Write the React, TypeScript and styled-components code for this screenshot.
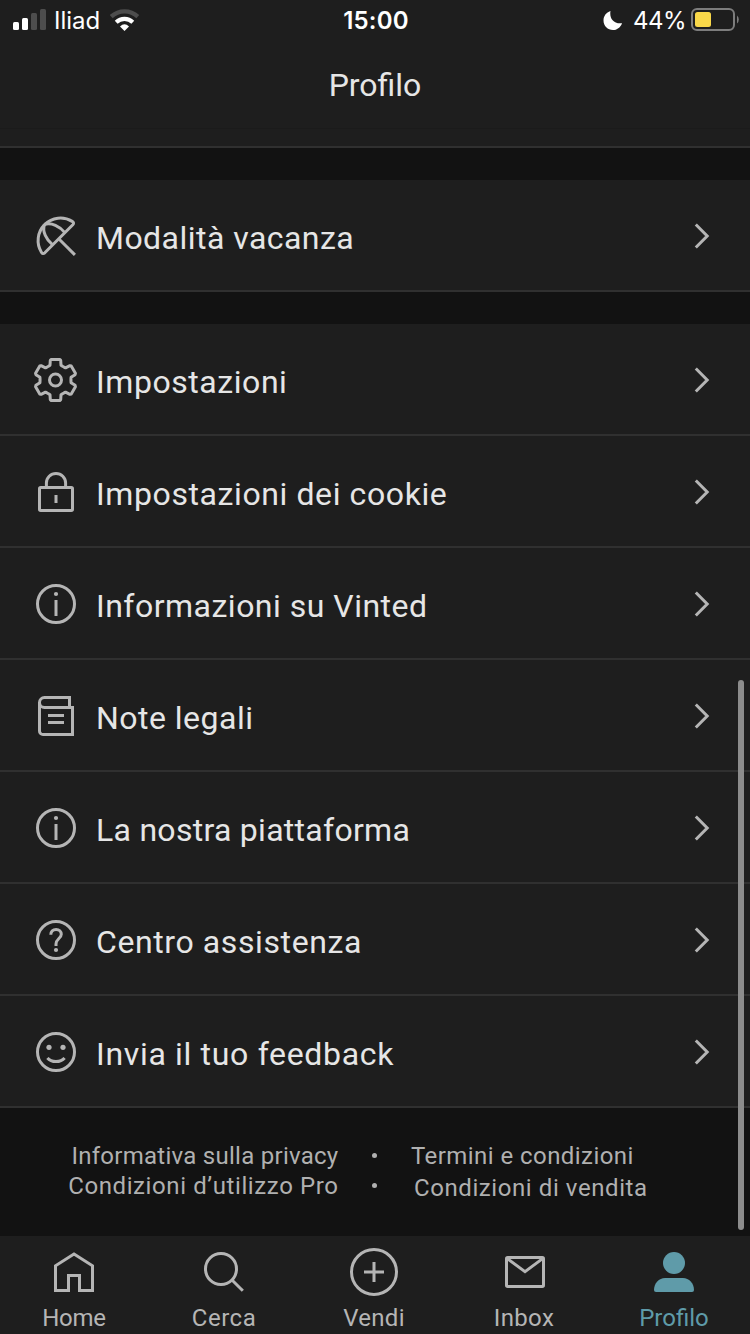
import React from "react";
import styled, { createGlobalStyle } from "styled-components";

const GlobalStyle = createGlobalStyle`
  *, *::before, *::after { box-sizing: border-box; }
  body { margin: 0; background: #1e1e1e; }
`;

const Screen = styled.div`
  position: relative;
  display: flex;
  flex-direction: column;
  width: 750px;
  height: 1334px;
  overflow: hidden;
  background: #121212;
  color: #e6e6e6;
  font-family: Roboto, "Liberation Sans", sans-serif;
`;

const Header = styled.header`
  flex: none;
  height: 148px;
  background: linear-gradient(#1b1b1b, #1b1b1b) 0 128px / 100% 1px no-repeat #1e1e1e;
  border-bottom: 2px solid #303030;
`;

const StatusBar = styled.div`
  display: grid;
  grid-template-columns: 1fr auto 1fr;
  align-items: center;
  height: 40px;
  padding: 0 11px 0 13px;
  color: #fff;
  font-family: Inter, "Liberation Sans", sans-serif;
  font-size: 24px;
  line-height: 38px;
`;

const StatusGroup = styled.div<{ $end?: boolean }>`
  display: flex;
  align-items: center;
  justify-content: ${(p) => (p.$end ? "flex-end" : "flex-start")};
  svg { display: block; flex: none; }
`;

const Carrier = styled.span`
  width: 56px;
  margin-left: 8px;
  padding-top: 2px;
`;

const Clock = styled.span`
  padding-top: 2px;
  font-weight: 600;
  letter-spacing: 0.2px;
`;

const Percent = styled.span`
  width: 58px;
  margin-left: 11px;
  padding-top: 2px;
  letter-spacing: -0.5px;
`;

const Title = styled.h1`
  margin: 25px 0 0;
  font-size: 32px;
  font-weight: 400;
  line-height: 40px;
  text-align: center;
`;

const Group = styled.section`
  flex: none;
  margin-top: 32px;
`;

const Row = styled.div`
  display: flex;
  align-items: center;
  height: 112px;
  padding: 2px 25px 0 32px;
  background: #1e1e1e;
  border-bottom: 2px solid #303030;
`;

const Glyph = styled.svg`
  display: block;
  flex: none;
  fill: none;
  stroke: currentColor;
  stroke-width: 3;
  color: #b5b5b5;
`;

const RowLabel = styled.span<{ $tracking: number }>`
  flex: 1;
  margin-left: 16px;
  padding-top: 4px;
  font-size: 32px;
  line-height: 40px;
  white-space: nowrap;
  letter-spacing: ${(p) => p.$tracking}px;
`;

const Footer = styled.footer`
  flex: none;
  display: flex;
  height: 128px;
  padding-top: 33px;
  color: #b0b0b0;
  font-size: 24px;
  line-height: 30px;
  white-space: nowrap;
`;

const LinkColumn = styled.div<{ $end?: boolean }>`
  width: ${(p) => (p.$end ? "338.5px" : "auto")};
  text-align: ${(p) => (p.$end ? "right" : "left")};
`;

const FooterLink = styled.div<{ $tracking: number; $shifted?: boolean }>`
  letter-spacing: ${(p) => p.$tracking}px;
  ${(p) => p.$shifted && "margin-top: 2px; padding-left: 3px;"}
`;

const Bullets = styled.div`
  width: 72.5px;
  padding-left: 33.5px;
`;

const Bullet = styled.div`
  display: flex;
  align-items: center;
  height: 30px;
  padding-bottom: 1px;
  &::before {
    content: "";
    width: 5px;
    height: 5px;
    border-radius: 50%;
    background: #b0b0b0;
  }
`;

const TabBar = styled.nav`
  flex: 1;
  background: #1e1e1e;
`;

const Tabs = styled.div`
  display: grid;
  grid-template-columns: repeat(5, 150px);
  margin-left: -1px;
  padding-top: 10px;
`;

const Tab = styled.div<{ $active?: boolean }>`
  display: flex;
  flex-direction: column;
  align-items: center;
  color: ${(p) => (p.$active ? "#5f9ba9" : "#b5b5b5")};
  ${Glyph} { color: inherit; }
`;

const TabLabel = styled.span<{ $tracking: number }>`
  margin-top: 6px;
  font-size: 24px;
  line-height: 28px;
  letter-spacing: ${(p) => p.$tracking}px;
`;

const ScrollThumb = styled.div`
  position: absolute;
  top: 680px;
  right: 6px;
  width: 6px;
  height: 550px;
  border-radius: 3px;
  background: #8c8c8c;
`;

const RowIcon = ({ children }: { children: React.ReactNode }) => (
  <Glyph width="48" height="48" viewBox="-24 -24 48 48">{children}</Glyph>
);

const Umbrella = () => (
  <RowIcon>
    <g strokeLinejoin="round">
      <path d="M-14.6 16.2A22.4 22.4 0 0 1 16.2 -14.6Q18.6 -13.2 16.8 -11.2L-11.2 16.8Q-13.2 18.6 -14.6 16.2Z" />
      <path d="M-11.6 -11.6C-14 -4.5 -9.5 4 -3.6 8.6M-11.6 -11.6C-4.5 -14 4 -9.5 8.6 -3.6" />
      <path d="M2.7 2.7L18.9 18.9" />
    </g>
  </RowIcon>
);

const gearOutline = (() => {
  const tooth = [[-7, -13.8], [-5.5, -14.8], [-5.2, -19.6], [-4.2, -20.6], [4.2, -20.6], [5.2, -19.6], [5.5, -14.8], [7, -13.8]];
  const points: string[] = [];
  for (let i = 0; i < 6; i++) {
    const a = (i * Math.PI) / 3;
    tooth.forEach(([x, y]) => {
      points.push(`${(x * Math.cos(a) - y * Math.sin(a)).toFixed(2)},${(x * Math.sin(a) + y * Math.cos(a)).toFixed(2)}`);
    });
  }
  return points.join(" ");
})();

const Gear = () => (
  <RowIcon>
    <g transform="translate(-0.5 0)" strokeLinejoin="round">
      <polygon points={gearOutline} />
      <circle r="6" />
    </g>
  </RowIcon>
);

const Lock = () => (
  <RowIcon>
    <rect x="-16.5" y="-4.5" width="33" height="23" rx="1.2" />
    <path d="M-9.6 -4.6V-9A9.6 9.6 0 0 1 9.6 -9V-4.6M0 3V11" />
  </RowIcon>
);

const Info = () => (
  <RowIcon>
    <circle r="18.5" />
    <path d="M0 -4V12" />
    <circle cy="-10" r="2.1" fill="currentColor" stroke="none" />
  </RowIcon>
);

const Book = () => (
  <RowIcon>
    <path d="M13.5 -8.5V-18.5H-11.5A5 5 0 0 0 -11.5 -8.5H16.5V18.5H-13A3.5 3.5 0 0 1 -16.5 15V-13.5M-8 -0.5H8M-8 6.5H8" />
  </RowIcon>
);

const Question = () => (
  <RowIcon>
    <circle r="18.5" />
    <path d="M-5.2 -5.2C-5.2 -8.6 -3 -10.6 0.1 -10.6C3.1 -10.6 5.3 -8.5 5.3 -5.7C5.3 -1.6 0 -1.2 0 4V6" />
    <circle cy="10" r="2.1" fill="currentColor" stroke="none" />
  </RowIcon>
);

const Smile = () => (
  <RowIcon>
    <circle r="18.5" />
    <path d="M-8.6 6C-4.6 10.8 4.6 10.8 8.6 6" />
    <g fill="currentColor" stroke="none">
      <circle cx="-7" cy="-4.7" r="2.6" />
      <circle cx="7" cy="-4.7" r="2.6" />
    </g>
  </RowIcon>
);

const Chevron = () => (
  <RowIcon>
    <path d="M-5.2 -11.5L6.2 0L-5.2 11.5" />
  </RowIcon>
);

const TabIcon = ({ children }: { children: React.ReactNode }) => (
  <Glyph width="52" height="52" viewBox="-26 -26 52 52">{children}</Glyph>
);

const HomeIcon = () => (
  <TabIcon><path d="M0 -18L18.5 -6.2V18.5H5.5V3.5H-5.5V18.5H-18.5V-6.2Z" /></TabIcon>
);
const SearchIcon = () => (
  <TabIcon><circle cx="-3" cy="-3" r="15.5" /><path d="M8 8L18.8 18.8" /></TabIcon>
);
const SellIcon = () => (
  <TabIcon><circle r="22.5" /><path d="M-10 0H10M0 -10V10" /></TabIcon>
);
const InboxIcon = () => (
  <TabIcon>
    <g transform="translate(1 0)">
      <rect x="-18.5" y="-14.5" width="37" height="29" rx="1.2" />
      <path d="M-17.6 -13.4L0 -0.4L17.6 -13.4" />
    </g>
  </TabIcon>
);
const ProfileIcon = () => (
  <TabIcon>
    <g fill="currentColor" stroke="none">
      <circle cy="-9" r="11" />
      <path d="M-20 18C-20 11 -15 6 -9 6H9C15 6 20 11 20 18Q20 20 18 20H-18Q-20 20 -20 18Z" />
    </g>
  </TabIcon>
);

const settingsRows = [
  { label: "Impostazioni", tracking: 0.56, Icon: Gear },
  { label: "Impostazioni dei cookie", tracking: 0.6, Icon: Lock },
  { label: "Informazioni su Vinted", tracking: 0.49, Icon: Info },
  { label: "Note legali", tracking: 0.48, Icon: Book },
  { label: "La nostra piattaforma", tracking: 0.28, Icon: Info },
  { label: "Centro assistenza", tracking: 0.6, Icon: Question },
  { label: "Invia il tuo feedback", tracking: 0.68, Icon: Smile },
];

const tabs = [
  { label: "Home", tracking: -0.3, Icon: HomeIcon },
  { label: "Cerca", tracking: 0.5, Icon: SearchIcon },
  { label: "Vendi", tracking: 0.3, Icon: SellIcon },
  { label: "Inbox", tracking: 0.33, Icon: InboxIcon },
  { label: "Profilo", tracking: 0, Icon: ProfileIcon, active: true },
];

const ListRow = ({ label, tracking, Icon }: { label: string; tracking: number; Icon: React.FC }) => (
  <Row>
    <Icon />
    <RowLabel $tracking={tracking}>{label}</RowLabel>
    <Chevron />
  </Row>
);

export default function App() {
  return (
    <>
      <GlobalStyle />
      <Screen>
        <Header>
          <StatusBar>
            <StatusGroup>
              <svg width="33" height="40" viewBox="0 0 33 40" fill="#fff">
                <rect x="0" y="22" width="6" height="8" rx="1.5" />
                <rect x="9" y="18" width="6" height="12" rx="1.5" />
                <rect x="18" y="13" width="6" height="17" rx="1.5" fill="#4d4d4d" />
                <rect x="27" y="9" width="6" height="21" rx="1.5" fill="#4d4d4d" />
              </svg>
              <Carrier>Iliad</Carrier>
              <svg width="30" height="40" viewBox="0 0 30 40" fill="none">
                <path d="M1.2 16.6A19.5 19.5 0 0 1 27.8 16.6" stroke="#4d4d4d" strokeWidth="4.2" />
                <path d="M6.2 22.2A12.2 12.2 0 0 1 22.8 22.2" stroke="#fff" strokeWidth="4.2" />
                <path d="M14.5 31L10 26.5Q14.5 21.8 19 26.5Z" fill="#fff" />
              </svg>
            </StatusGroup>
            <Clock>15:00</Clock>
            <StatusGroup $end>
              <svg width="19" height="40" viewBox="0 0 19 40">
                <path d="M7 11C5.800 17.500 9.300 24.200 18.600 23.200C16.800 27.600 13.500 30 9.500 30C4.200 30 0 26 0 20.500C0 16 2.700 12.400 7 11Z" fill="#fff" transform="translate(0.5 0)" />
              </svg>
              <Percent>44%</Percent>
              <svg width="48" height="40" viewBox="0 0 48 40">
                <rect x="1" y="9" width="42" height="21" rx="5" fill="none" stroke="#7d7d7d" strokeWidth="2" />
                <rect x="4" y="12" width="16" height="15" rx="2.5" fill="#f9d849" />
                <path d="M46 15.500Q47.800 17 47.800 19.500T46 23.500Z" fill="#7d7d7d" />
              </svg>
            </StatusGroup>
          </StatusBar>
          <Title>Profilo</Title>
        </Header>

        <Group>
          <ListRow label="Modalità vacanza" tracking={0.46} Icon={Umbrella} />
        </Group>
        <Group>
          {settingsRows.map((row) => (
            <ListRow key={row.label} {...row} />
          ))}
        </Group>

        <Footer>
          <LinkColumn $end>
            <FooterLink $tracking={0.27}>Informativa sulla privacy</FooterLink>
            <FooterLink $tracking={0.6}>Condizioni d’utilizzo Pro</FooterLink>
          </LinkColumn>
          <Bullets>
            <Bullet />
            <Bullet />
          </Bullets>
          <LinkColumn>
            <FooterLink $tracking={0.44}>Termini e condizioni</FooterLink>
            <FooterLink $tracking={0.58} $shifted>Condizioni di vendita</FooterLink>
          </LinkColumn>
        </Footer>

        <TabBar>
          <Tabs>
            {tabs.map(({ label, tracking, Icon, active }) => (
              <Tab key={label} $active={active}>
                <Icon />
                <TabLabel $tracking={tracking}>{label}</TabLabel>
              </Tab>
            ))}
          </Tabs>
        </TabBar>
        <ScrollThumb />
      </Screen>
    </>
  );
}
